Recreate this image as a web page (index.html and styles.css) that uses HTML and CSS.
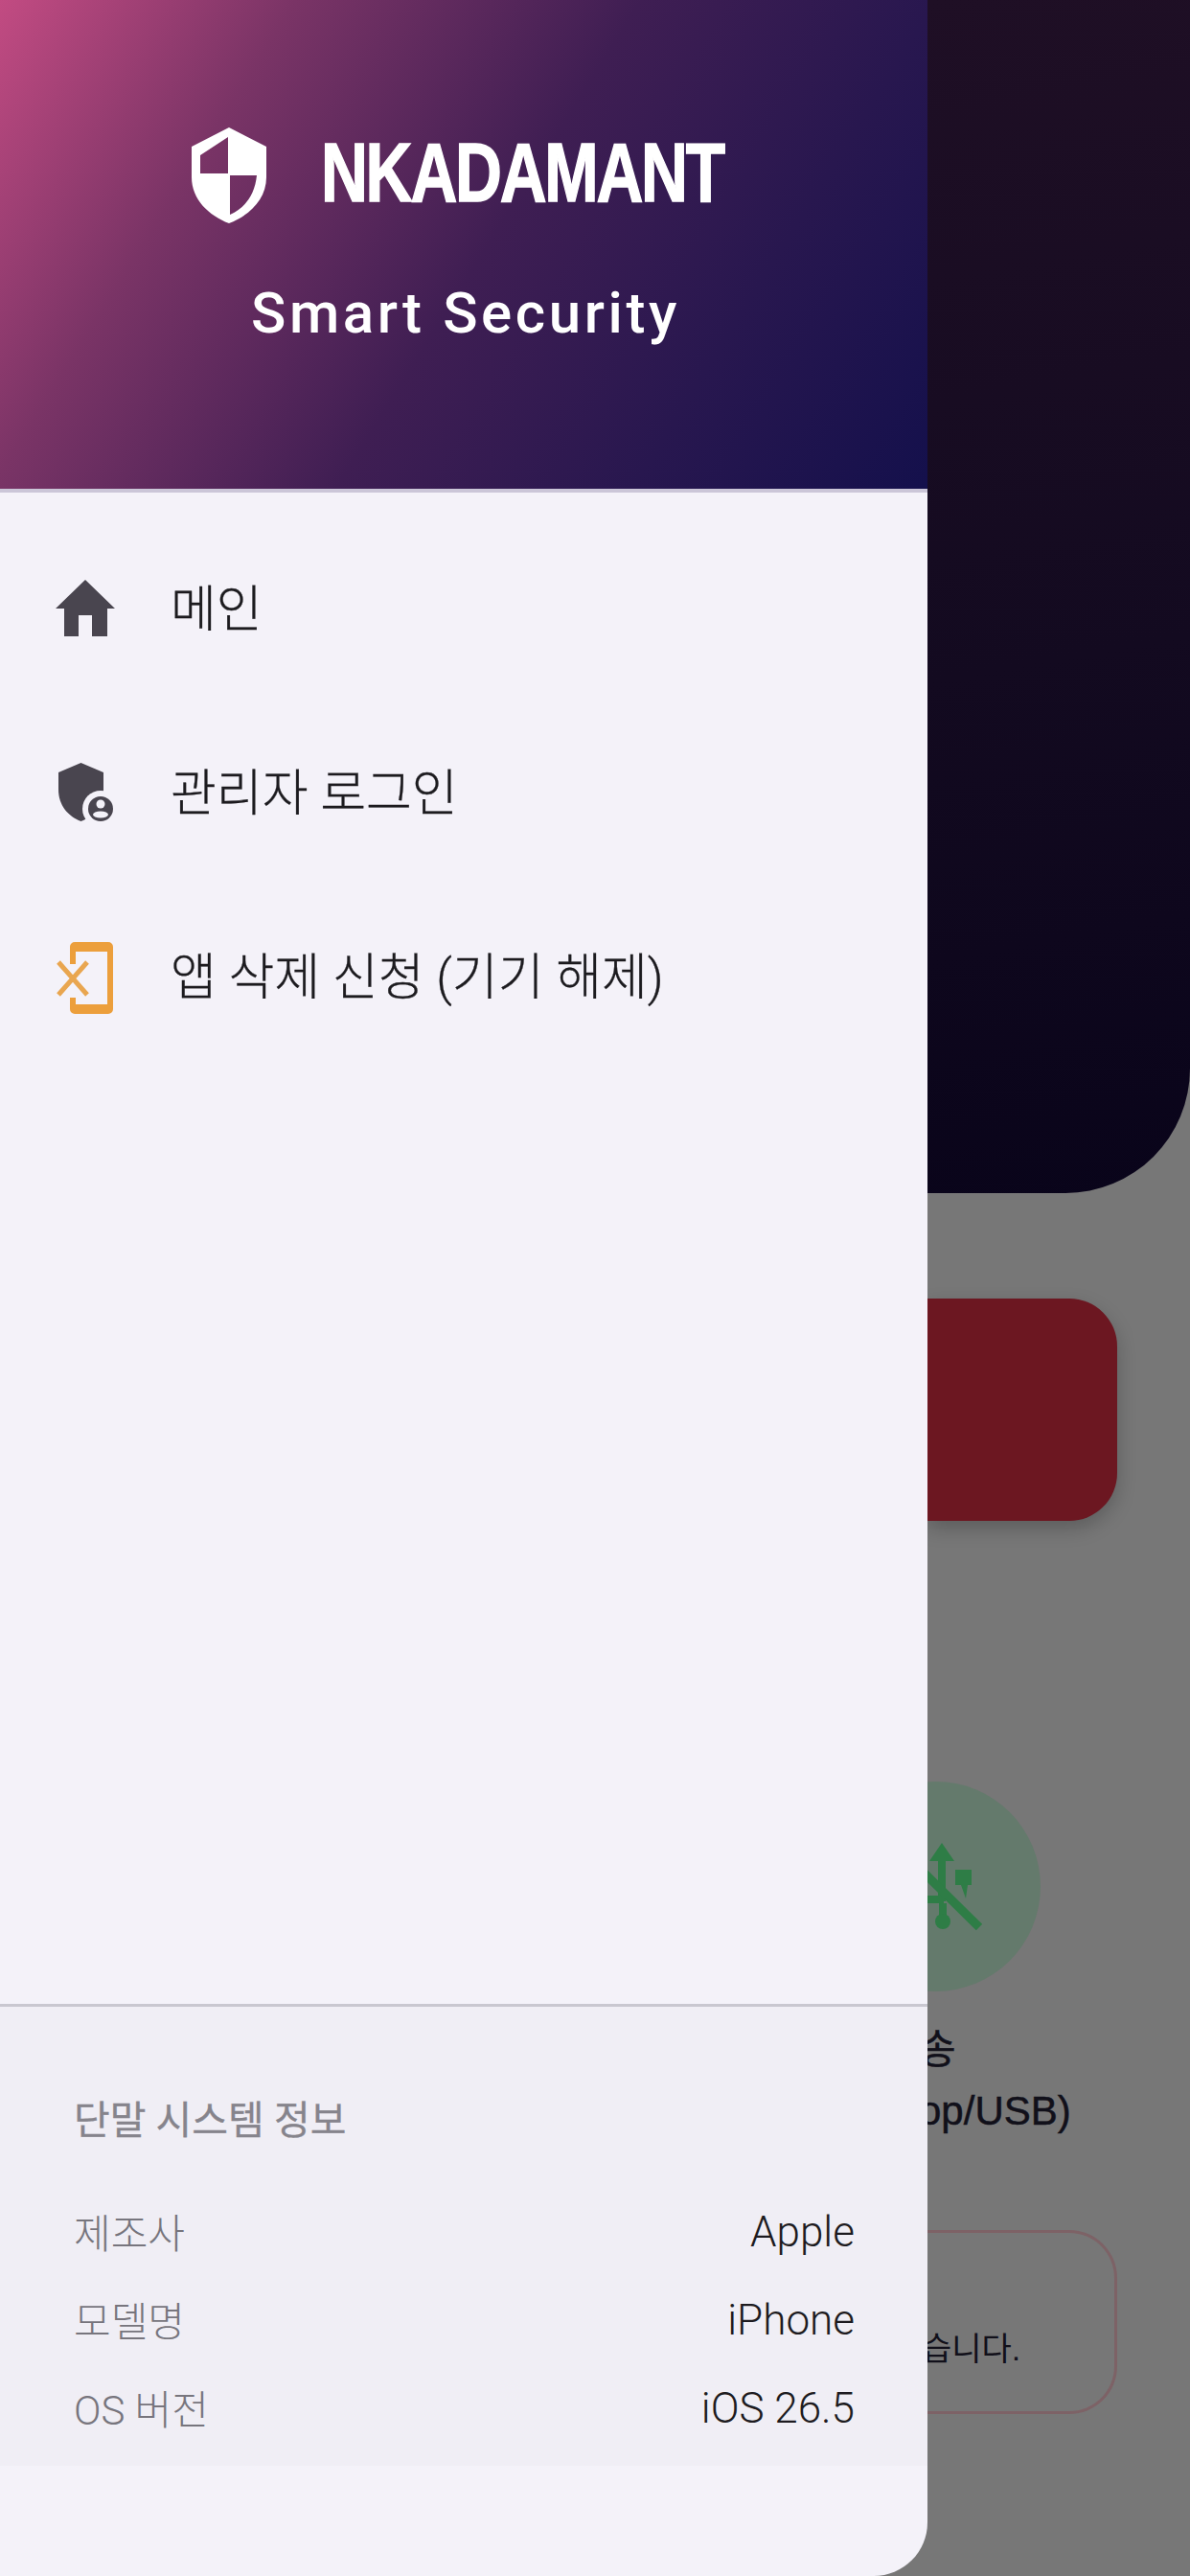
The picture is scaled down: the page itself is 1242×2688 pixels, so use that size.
FILE: index.html
```html
<!DOCTYPE html>
<html lang="ko">
<head>
    <meta charset="UTF-8">
    <meta name="viewport" content="width=device-width, initial-scale=1.0">
    <title>NK ADAMANT Smart Security</title>
    <link rel="stylesheet" href="styles.css">
</head>
<body>
<aside class="drawer">
    <header class="drawer-head">
        <div class="logo-row">
            <svg class="logo-shield" viewBox="0 0 78 100">
                <path fill="#fff" fill-rule="evenodd" d="M39 0 78 20V52C78 75 60 92 39 100 18 92 0 75 0 52V20ZM38 10 9 29V48H38ZM40 50V91C56 84 66 70 68 50Z"/>
            </svg>
            <div class="wordmark"><span>NK ADAMANT</span></div>
        </div>
        <div class="tagline">Smart Security</div>
    </header>

    <nav class="menu">
        <a class="menu-item">
            <svg class="menu-icon" viewBox="0 0 72 80">
                <path fill="#49454f" d="M2 40 33 10 64 40H56V69H40V47H26V69H11V40Z"/>
            </svg>
            <span>메인</span>
        </a>
        <a class="menu-item">
            <svg class="menu-icon" viewBox="0 0 72 80">
                <path fill="#49454f" d="M28.500 9 52 19V37C52 53 42 65 28.500 70 15 65 5 53 5 37V19Z"/>
                <circle fill="#f4f2f9" cx="49" cy="57" r="19"/>
                <circle fill="#49454f" cx="49" cy="57" r="13"/>
                <circle fill="#f4f2f9" cx="49" cy="52" r="4.500"/>
                <ellipse fill="#f4f2f9" cx="49" cy="63" rx="8" ry="3.500"/>
            </svg>
            <span>관리자 로그인</span>
        </a>
        <a class="menu-item">
            <svg class="menu-icon" viewBox="0 0 72 80">
                <path fill="#ec9f3c" d="M17 27V9A5 5 0 0 1 22 4H57A5 5 0 0 1 62 9V74A5 5 0 0 1 57 79H22A5 5 0 0 1 17 74V62H23V69H56V14H23V27Z"/>
                <path stroke="#e9a650" stroke-width="5" fill="none" d="M5 25 35 59M35 25 5 59"/>
            </svg>
            <span>앱 삭제 신청 (기기 해제)</span>
        </a>
    </nav>

    <section class="device-info">
        <h2>단말 시스템 정보</h2>
        <div class="info-row"><span>제조사</span><b>Apple</b></div>
        <div class="info-row"><span>모델명</span><b>iPhone</b></div>
        <div class="info-row"><span>OS 버전</span><b>iOS 26.5</b></div>
    </section>
</aside>

<main class="behind">
    <div class="hero"></div>
    <div class="red-card"></div>
    <div class="usb-circle">
        <svg viewBox="0 0 219 219">
            <path fill="#2e7d46" d="M116 64 129 83H120V125H112V83H103Z"/>
            <path fill="#2e7d46" d="M130 92H147V108H143L141 122 136 108H130Z"/>
            <path fill="#2e7d46" d="M85 119H118V127H85ZM113 127H121V140H113Z"/>
            <ellipse fill="#2e7d46" cx="117" cy="146" rx="8" ry="8"/>
            <path stroke="#2e7d46" stroke-width="9" fill="none" d="M80 78 155 152"/>
        </svg>
    </div>
    <div class="usb-label">
        <div>송</div>
        <div>op/USB)</div>
    </div>
    <div class="notice">습니다.</div>
</main>
</body>
</html>
```

FILE: styles.css
```css
/* Umum */
html, body {
    margin: 0;
    width: 1242px;
    height: 2688px;
}

body {
    display: flex;
    overflow: hidden;
    background: #777777;
    font-family: Roboto, "Noto Sans CJK KR", sans-serif;
}

/* Drawer */
.drawer {
    position: relative;
    z-index: 1;
    width: 968px;
    flex-shrink: 0;
    display: flex;
    flex-direction: column;
    background: #f4f2f9;
    border-bottom-right-radius: 56px;
    overflow: hidden;
}

.drawer-head {
    height: 514px;
    flex-shrink: 0;
    box-sizing: border-box;
    padding-top: 133px;
    border-bottom: 4px solid #cbc6d8;
    background: linear-gradient(122deg, #c24b82 0%, #7a3466 24%, #3f1e53 52%, #28174f 76%, #14104c 100%);
    color: white;
}

.logo-row {
    display: flex;
    align-items: flex-start;
    padding-left: 200px;
}

.logo-shield {
    width: 78px;
    height: 100px;
    flex-shrink: 0;
}

.wordmark {
    width: 420px;
    height: 63px;
    margin-top: 15px;
    margin-left: 57px;
    font-family: "Liberation Sans", sans-serif;
    font-size: 88px;
    font-weight: 700;
    line-height: 63px;
    white-space: nowrap;
}

.wordmark span {
    display: inline-block;
    transform: scaleX(0.77);
    transform-origin: left center;
    letter-spacing: -3px;
    word-spacing: -18px;
    -webkit-text-stroke: 1.5px white;
}

.tagline {
    margin-top: 60px;
    padding-left: 4px;
    text-align: center;
    font-size: 60px;
    font-weight: 500;
    line-height: 68px;
    letter-spacing: 3.600px;
}

/* Menu */
.menu {
    flex: 1;
    padding-top: 25px;
}

.menu-item {
    display: flex;
    align-items: center;
    gap: 50px;
    height: 192px;
    padding-left: 56px;
    font-size: 52px;
    font-weight: 300;
    color: #1c1b1f;
    -webkit-text-stroke: 0.3px #1c1b1f;
}

.menu-item span {
    margin-bottom: 7px;
}

.menu-icon {
    width: 72px;
    height: 80px;
    flex-shrink: 0;
    overflow: visible;
}

/* Info perangkat */
.device-info {
    box-sizing: border-box;
    height: 482px;
    margin-bottom: 115px;
    padding: 87px 76px 0 77px;
    border-top: 3px solid #c9c7d0;
    background: #f0eef5;
}

.device-info h2 {
    margin: 0 0 38px;
    font-size: 41px;
    font-weight: 400;
    line-height: 64px;
    color: #86848c;
    -webkit-text-stroke: 0.3px #86848c;
}

.info-row {
    display: flex;
    justify-content: space-between;
    align-items: center;
    height: 92px;
    font-size: 42px;
    font-weight: 300;
    color: #77757d;
}

.info-row span {
    margin-bottom: 3px;
}

.info-row b {
    font-size: 44px;
    font-weight: 300;
    color: #1d1b20;
}

/* Halaman di belakang drawer */
.behind {
    flex: 1;
    min-width: 0;
}

.hero {
    height: 1245px;
    border-bottom-right-radius: 130px;
    background: linear-gradient(170deg, #1f0f25 0%, #130a20 55%, #09041a 100%);
}

.red-card {
    height: 232px;
    margin-top: 110px;
    margin-right: 76px;
    border-radius: 0 50px 50px 0;
    background: #6c1721;
    box-shadow: 0 8px 20px rgba(0, 0, 0, 0.22);
}

.usb-circle {
    width: 219px;
    height: 219px;
    margin-top: 272px;
    margin-left: -101px;
    border-radius: 50%;
    background: #647a6c;
}

.usb-circle svg {
    display: block;
}

.usb-label {
    margin-top: 29px;
    margin-left: -9px;
    font-family: "Liberation Sans", "Noto Sans CJK KR", sans-serif;
    font-size: 42px;
    line-height: 64px;
    white-space: nowrap;
    color: #11101a;
    -webkit-text-stroke: 0.5px #11101a;
}

.notice {
    box-sizing: border-box;
    height: 192px;
    margin-top: 92px;
    margin-right: 76px;
    padding-top: 97px;
    border: 3px solid #7d6266;
    border-left: none;
    border-radius: 0 50px 50px 0;
    font-family: "Liberation Sans", "Noto Sans CJK KR", sans-serif;
    font-size: 34px;
    line-height: 48px;
    text-indent: -6px;
    color: #11101a;
}
```
